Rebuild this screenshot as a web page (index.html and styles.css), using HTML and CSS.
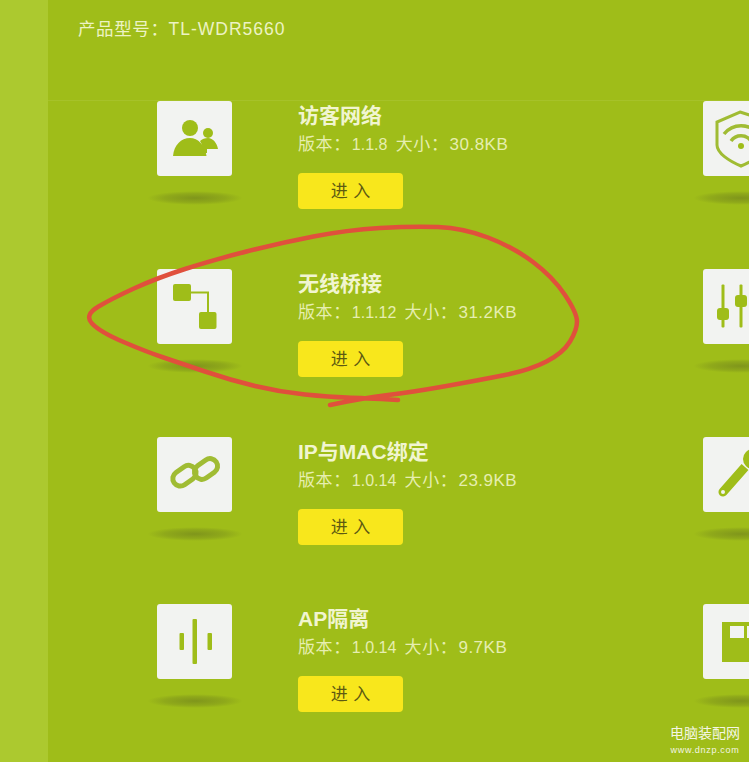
FILE: index.html
```html
<!DOCTYPE html>
<html lang="zh-CN">
<head>
  <meta charset="UTF-8">
  <title>应用管理</title>
  <link rel="stylesheet" href="styles.css">
</head>
<body>
  <div class="page">
    <div class="sidebar"></div>
    <div class="main">
      <div class="header">产品型号：<span class="model">TL-WDR5660</span></div>
      <div class="apps">
        <div class="app">
          <div class="icon-col">
            <div class="icon">
              <svg viewBox="0 0 75 75"><circle cx="33" cy="27" r="8"/><path d="M16 55C17 44 24 37 33 37C41 37 48 44 49.500 55Z"/><circle cx="51" cy="32" r="5"/><path d="M43 40C45 38 48 37 51 37C56 37 60 42 61 48H50V52H47C46 47 45 43 43 40Z"/></svg>
            </div>
            <div class="shadow"></div>
          </div>
          <div class="info">
            <h3>访客网络</h3>
            <p>版本：<span class="ver">1.1.8</span> 大小：<span class="size">30.8KB</span></p>
            <button class="enter">进 入</button>
          </div>
        </div>
        <div class="app">
          <div class="icon-col">
            <div class="icon">
              <svg viewBox="0 0 75 75" class="line"><path d="M37 11L56 17C61 19 62 21 62 24V44C62 52 50 60 38 65C26 60 14 52 14 44V21Z"/><path class="arc" d="M21 33C30 22 46 22 55 33"/><path class="arc" d="M28 40C33 33 43 33 48 40"/><circle class="dot" cx="38" cy="45" r="3"/></svg>
            </div>
            <div class="shadow"></div>
          </div>
        </div>
        <div class="app">
          <div class="icon-col">
            <div class="icon">
              <svg viewBox="0 0 75 75"><rect x="16" y="15" width="18" height="17" rx="2"/><rect x="42" y="43" width="17.500" height="17" rx="2"/><path d="M34 22.500H52V43H50V24.500H34Z"/></svg>
            </div>
            <div class="shadow"></div>
          </div>
          <div class="info">
            <h3>无线桥接</h3>
            <p>版本：<span class="ver">1.1.12</span> 大小：<span class="size">31.2KB</span></p>
            <button class="enter">进 入</button>
          </div>
        </div>
        <div class="app">
          <div class="icon-col">
            <div class="icon">
              <svg viewBox="0 0 75 75"><rect x="18.500" y="15.500" width="3" height="43" rx="1"/><rect x="36.500" y="15.500" width="3" height="43" rx="1"/><rect x="14" y="39" width="12" height="12" rx="3"/><rect x="32" y="26" width="12" height="12" rx="3"/></svg>
            </div>
            <div class="shadow"></div>
          </div>
        </div>
        <div class="app">
          <div class="icon-col">
            <div class="icon">
              <svg viewBox="0 0 75 75" class="line line-thick"><rect x="15" y="31.500" width="25" height="15" rx="7.500" transform="rotate(-35 27 39)"/><rect x="36.500" y="24.500" width="25" height="15" rx="7.500" transform="rotate(-35 49 32)"/></svg>
            </div>
            <div class="shadow"></div>
          </div>
          <div class="info">
            <h3>IP与MAC绑定</h3>
            <p>版本：<span class="ver">1.0.14</span> 大小：<span class="size">23.9KB</span></p>
            <button class="enter">进 入</button>
          </div>
        </div>
        <div class="app">
          <div class="icon-col">
            <div class="icon">
              <svg viewBox="0 0 75 75"><path d="M16.600 52L38.600 27L45.400 33L23.400 58A4.500 4.500 0 0 1 16.600 52Z"/><circle cx="50" cy="22" r="10"/><circle class="hole" cx="20" cy="55" r="2"/></svg>
            </div>
            <div class="shadow"></div>
          </div>
        </div>
        <div class="app">
          <div class="icon-col">
            <div class="icon">
              <svg viewBox="0 0 75 75"><rect x="22.500" y="29" width="4.500" height="17" rx="1"/><rect x="35.500" y="15" width="4.500" height="45" rx="1"/><rect x="50.500" y="29" width="4.500" height="17" rx="1"/></svg>
            </div>
            <div class="shadow"></div>
          </div>
          <div class="info">
            <h3>AP隔离</h3>
            <p>版本：<span class="ver">1.0.14</span> 大小：<span class="size">9.7KB</span></p>
            <button class="enter">进 入</button>
          </div>
        </div>
        <div class="app">
          <div class="icon-col">
            <div class="icon">
              <svg viewBox="0 0 75 75"><path d="M19 18H70V58H19Z"/><path class="hole" d="M27 22H41V34H27ZM44 22H60V34H44Z"/></svg>
            </div>
            <div class="shadow"></div>
          </div>
        </div>
      </div>
    </div>

    <svg class="scribble" viewBox="0 0 749 762">
      <path d="M330 405Q363 398 388 395Q413 392 446.500 386Q480 380 505 375Q530 370 546.500 361.500Q563 353 570 341.500Q577 330 577 321.500Q577 313 565 295Q553 277 533 262Q513 247 488 237.500Q463 228 438 227Q413 226 380 228Q347 230 313.500 236.500Q280 243 246.500 251.500Q213 260 185 269Q157 278 135 288Q113 298 98.500 306.500Q84 315 92 323.500Q100 332 123.500 342Q147 352 163.500 357.500Q180 363 205 371.500Q230 380 255 386Q280 392 305 394.500Q330 397 346.500 397.500Q363 398 398 400"/>
    </svg>

    <div class="watermark">
      <div class="wm-name">电脑装配网</div>
      <div class="wm-url">www.dnzp.com</div>
    </div>
  </div>
</body>
</html>
```

FILE: styles.css
```css
* {
  margin: 0;
  padding: 0;
  box-sizing: border-box;
}

body {
  font-family: "Liberation Sans", "Noto Sans CJK SC", sans-serif;
  background: #9fbd19;
  overflow: hidden;
}

.page {
  position: relative;
  display: flex;
  width: 749px;
  height: 762px;
  overflow: hidden;
}

.sidebar {
  width: 48px;
  flex-shrink: 0;
  background: #acc92f;
}

.main {
  flex: 1;
  min-width: 0;
  background: #9fbd19;
}

.header {
  height: 101px;
  padding: 19px 0 0 30px;
  border-bottom: 1px solid #a6c229;
  color: #edf3c4;
  font-size: 17.500px;
  line-height: 20px;
  letter-spacing: 0.6px;
}

.model {
  letter-spacing: 1px;
}

.apps {
  display: grid;
  grid-template-columns: 546px 546px;
  grid-auto-rows: 167.800px;
  padding-left: 109px;
}

.app {
  display: flex;
}

.icon-col {
  width: 75px;
  flex-shrink: 0;
}

.icon {
  width: 75px;
  height: 75px;
  background: #f2f3f1;
  border-radius: 3px;
}

.icon svg {
  display: block;
  width: 75px;
  height: 75px;
  fill: #9fbd19;
}

.icon svg.line {
  fill: none;
  stroke: #a0bc33;
  stroke-width: 3;
}

.icon svg.line .arc {
  stroke-width: 3.500;
}

.icon svg.line-thick {
  stroke-width: 5;
}

.icon svg .dot {
  fill: #9fbd19;
  stroke: none;
}

.icon svg .hole {
  fill: #f2f3f1;
}

.shadow {
  width: 96px;
  height: 14px;
  margin: 15px 0 0 -10px;
  background: radial-gradient(ellipse at center, rgba(80, 90, 30, 0.4) 0%, rgba(80, 90, 30, 0.2) 45%, rgba(80, 90, 30, 0) 70%);
}

.info {
  margin-left: 66px;
  width: 300px;
}

.info h3 {
  color: #f1f5d0;
  font-size: 21px;
  font-weight: 700;
  line-height: 30px;
}

.info p {
  color: #e6eeb0;
  font-size: 17px;
  line-height: 26px;
  letter-spacing: 0.6px;
  word-spacing: 3px;
  padding-top: 1px;
  margin-bottom: 15px;
  white-space: nowrap;
}

.ver {
  font-size: 16px;
  letter-spacing: 0;
  margin-left: 1px;
}

.size {
  letter-spacing: 0.5px;
  margin-left: 1px;
}

.enter {
  display: block;
  width: 105px;
  height: 36px;
  padding-bottom: 3px;
  border: none;
  border-radius: 4px;
  background: #f8e71c;
  color: #5d5a12;
  font-family: inherit;
  font-size: 17px;
  word-spacing: 1px;
}

/* 红色手绘圈 */
.scribble {
  position: absolute;
  left: 0;
  top: 0;
  width: 749px;
  height: 762px;
  fill: none;
  stroke: #e0503c;
  stroke-width: 4.500;
  stroke-linecap: round;
  pointer-events: none;
}

.watermark {
  position: absolute;
  right: 9px;
  bottom: 6px;
  color: #f4f6e4;
  text-align: center;
}

.wm-name {
  font-size: 14px;
  line-height: 18px;
  margin-bottom: 2px;
}

.wm-url {
  font-size: 9px;
  line-height: 12px;
  letter-spacing: 0.7px;
}
```
